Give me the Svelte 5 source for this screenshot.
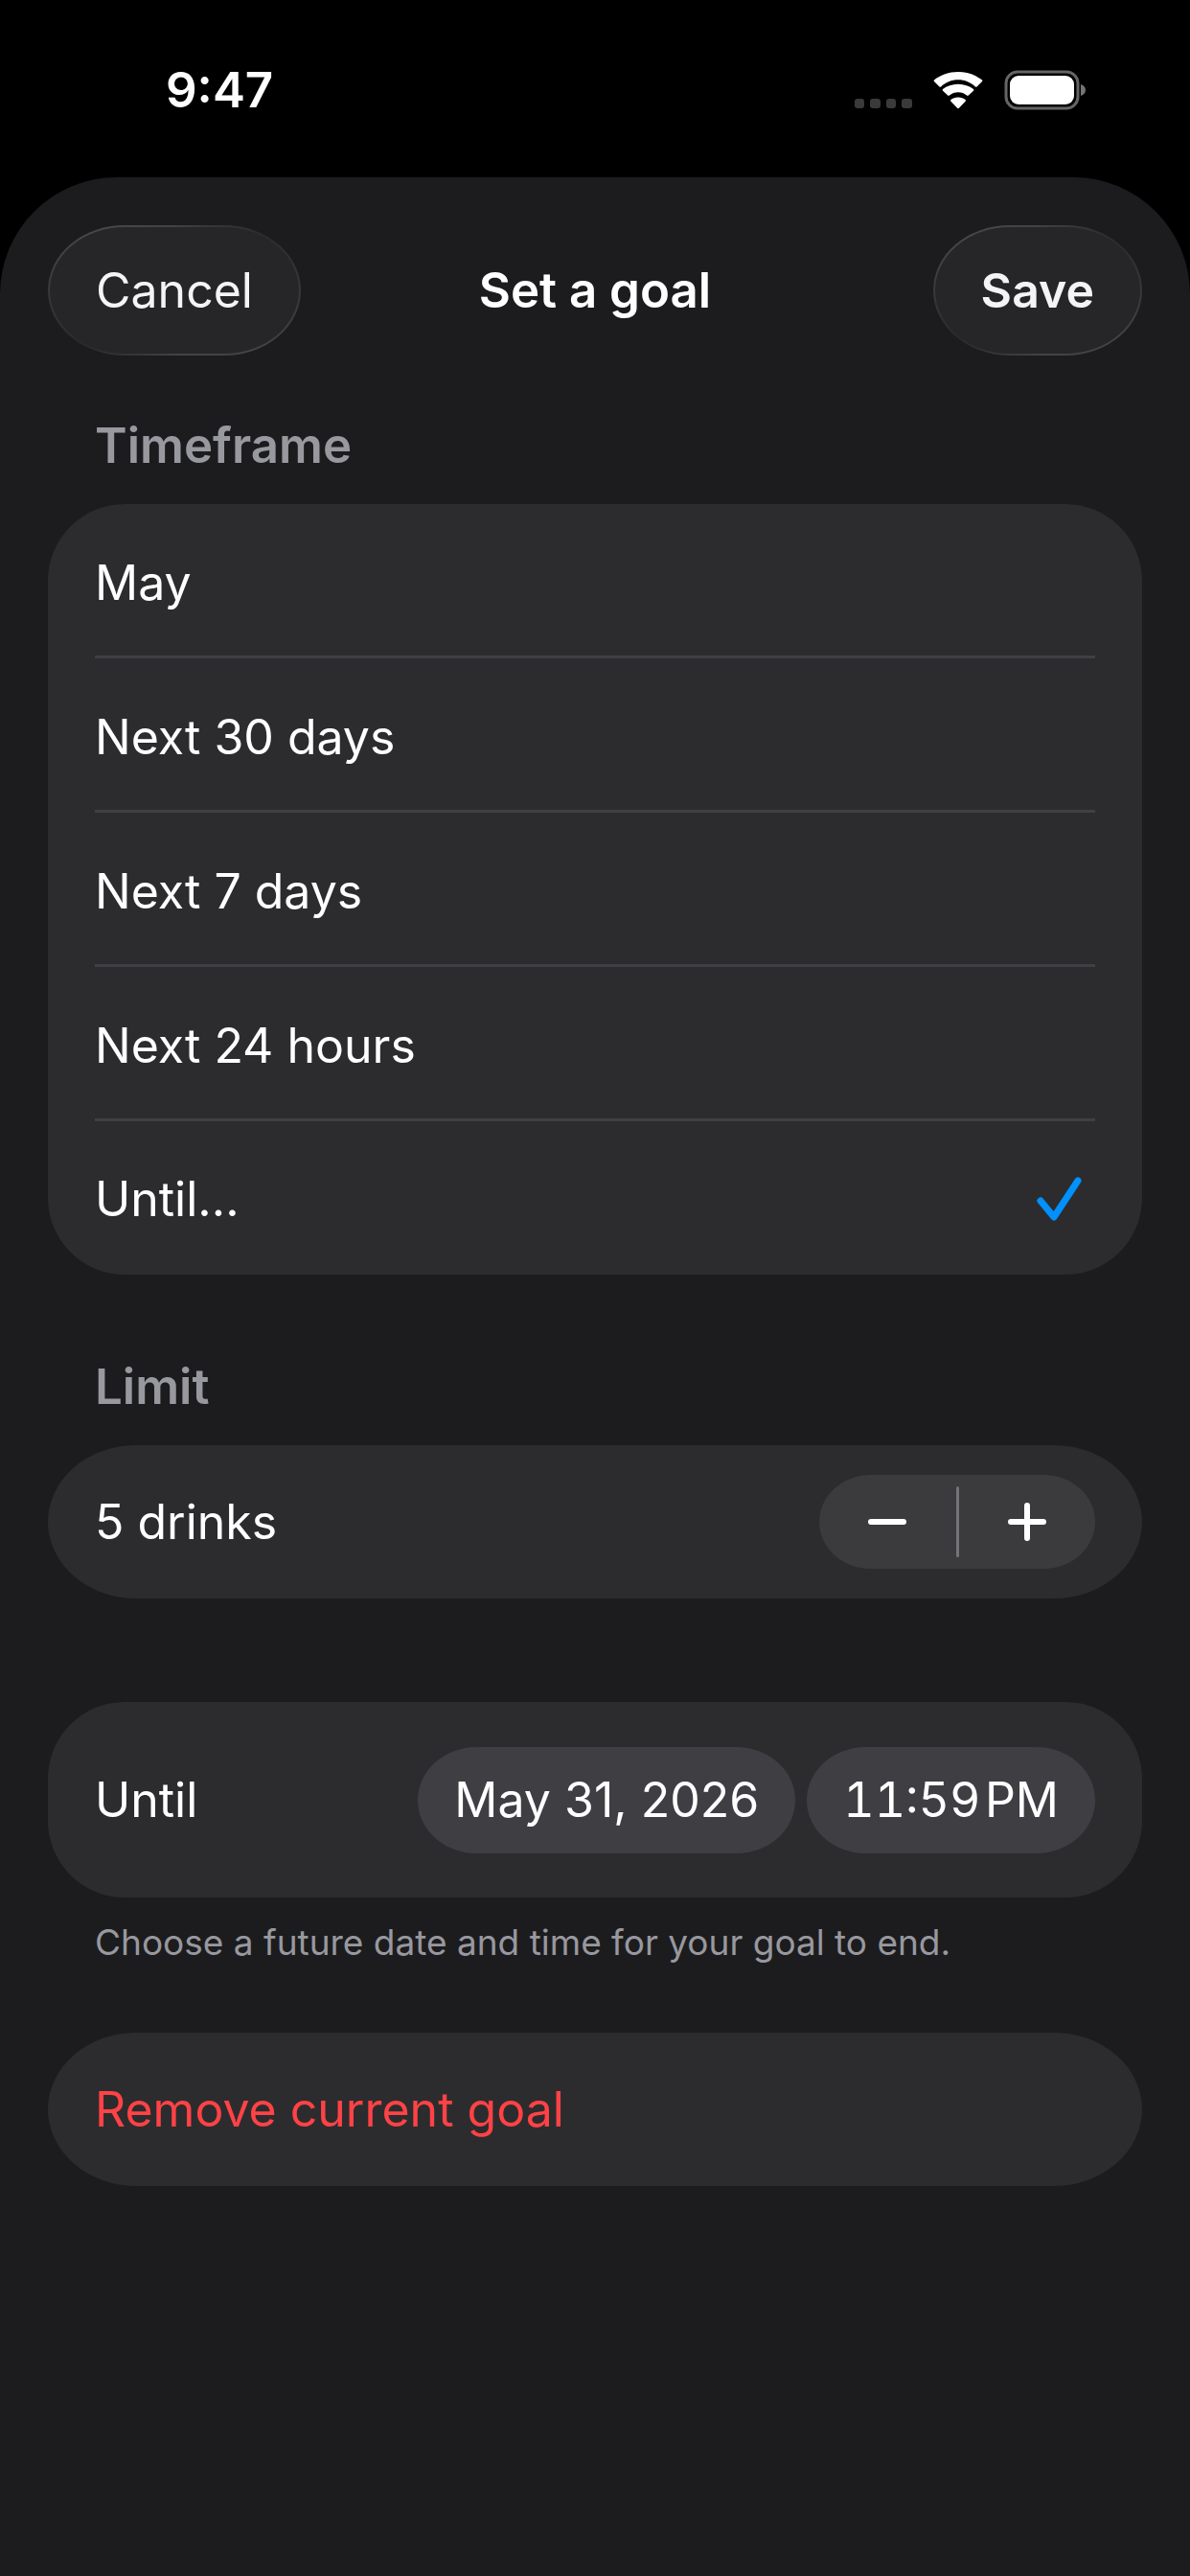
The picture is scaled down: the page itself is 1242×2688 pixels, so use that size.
<script lang="ts">
	const timeframes = ['May', 'Next 30 days', 'Next 7 days', 'Next 24 hours', 'Until...'];

	let selected = $state('Until...');
	let drinks = $state(5);

	const decrease = () => {
		drinks = Math.max(0, drinks - 1);
	};

	const increase = () => {
		drinks += 1;
	};
</script>

<div class="screen">
	<div class="status">
		<time class="status__time">9:47</time>
		<div class="status__icons">
			<svg width="62" height="12" viewBox="0 0 62 12" fill="#3a3a3a" aria-hidden="true">
				<rect x="1" y="1" width="10" height="10" rx="3" />
				<rect x="17" y="1" width="11" height="10" rx="3" />
				<rect x="34" y="1" width="10" height="10" rx="3" />
				<rect x="50" y="1" width="11" height="10" rx="3" />
			</svg>
			<svg class="wifi" width="52" height="39" viewBox="0 0 52 39" fill="#fff" aria-hidden="true">
				<path
					d="M26 8.2c6.9 0 13.2 2.7 17.9 7.2.5.5 1.2.5 1.6 0l5.5-5.3c.5-.5.5-1.2 0-1.6C44.4 3.2 35.6 0 26 0S7.6 3.2 1 8.500c-.5.4-.5 1.1 0 1.6l5.5 5.3c.4.5 1.1.5 1.6 0C12.8 10.9 19.1 8.2 26 8.2z"
				/>
				<path
					d="M26 21.2c3.4 0 6.6 1.2 9.1 3.4.6.5 1.2.5 1.7 0l5.2-4.900c.5-.5.5-1.2 0-1.7C37.8 14.9 32.2 12.8 26 12.8S14.2 14.9 10 18c-.5.5-.5 1.2 0 1.7l5.2 4.900c.5.5 1.1.5 1.7 0 2.500-2.2 5.7-3.4 9.1-3.4z"
				/>
				<path
					d="M33.6 29.1c.5.5.5 1.1 0 1.6l-6.7 7.1c-.5.5-1.3.5-1.8 0l-6.7-7.1c-.5-.5-.5-1.1 0-1.6 2-1.7 4.7-2.6 7.6-2.6s5.6.9 7.6 2.6z"
				/>
			</svg>
			<svg width="86" height="42" viewBox="0 0 86 42" aria-hidden="true">
				<rect x="2" y="2" width="75" height="38" rx="12" fill="none" stroke="#656565" stroke-width="3" />
				<rect x="6" y="6" width="67" height="30" rx="9" fill="#fff" />
				<path d="M80 15c3 1 5 3.2 5 6s-2 5-5 6z" fill="#757575" />
			</svg>
		</div>
	</div>

	<main class="sheet">
		<header class="header">
			<button class="glass-button" type="button">Cancel</button>
			<h1>Set a goal</h1>
			<button class="glass-button glass-button--save" type="button">Save</button>
		</header>

		<section class="group">
			<h2 id="timeframe-title">Timeframe</h2>
			<div class="card" role="radiogroup" aria-labelledby="timeframe-title">
				{#each timeframes as timeframe}
					<label class="option">
						<input type="radio" name="timeframe" value={timeframe} bind:group={selected} />
						<span>{timeframe}</span>
						{#if selected === timeframe}
							<svg class="check" width="48" height="46" viewBox="0 0 48 46" aria-hidden="true">
								<path d="M4 25 18 42 43 4" />
							</svg>
						{/if}
					</label>
				{/each}
			</div>
		</section>

		<section class="group group--limit">
			<h2>Limit</h2>
			<div class="card card--pill row">
				<span>{drinks} drinks</span>
				<div class="stepper">
					<button type="button" aria-label="Decrease" onclick={decrease}>
						<svg width="42" height="42" viewBox="0 0 42 42" aria-hidden="true">
							<path d="M4 21H38" />
						</svg>
					</button>
					<span class="stepper__divider"></span>
					<button type="button" aria-label="Increase" onclick={increase}>
						<svg width="42" height="42" viewBox="0 0 42 42" aria-hidden="true">
							<path d="M4 21H38M21 4V38" />
						</svg>
					</button>
				</div>
			</div>
		</section>

		<section class="group group--until">
			<div class="card row row--tall">
				<span>Until</span>
				<div class="pickers">
					<button class="picker" type="button">May 31, 2026</button>
					<button class="picker picker--time" type="button">11:59&#8202;PM</button>
				</div>
			</div>
			<p class="footnote">Choose a future date and time for your goal to end.</p>
		</section>

		<button class="card card--pill row remove" type="button">Remove current goal</button>
	</main>
</div>

<style>
	:global(body) {
		margin: 0;
		background: #000;
	}

	.screen {
		min-height: 100vh;
		display: flex;
		flex-direction: column;
		background: #000;
		color: #fff;
		font-family: Inter, 'Liberation Sans', sans-serif;
		font-size: 50px;
		line-height: 60px;
	}

	button {
		border: 0;
		margin: 0;
		padding: 0;
		background: none;
		color: inherit;
		font: inherit;
		cursor: pointer;
	}

	svg {
		display: block;
	}

	.status {
		height: 185px;
		box-sizing: border-box;
		padding: 64px 108px 0 173px;
		display: flex;
		justify-content: space-between;
		align-items: flex-start;
	}

	.status__time {
		font-size: 51px;
		font-weight: 600;
	}

	.status__icons {
		height: 60px;
		display: flex;
		align-items: center;
	}

	.status__icons svg:first-child {
		margin-top: 28px;
	}

	.wifi {
		margin: 0 22px 0 21px;
	}

	.sheet {
		flex: 1;
		box-sizing: border-box;
		padding: 50px;
		border-radius: 122px 122px 0 0;
		background: #1c1c1e;
	}

	.header {
		display: grid;
		grid-template-columns: 1fr auto 1fr;
		align-items: center;
	}

	h1,
	h2 {
		margin: 0;
		font-size: 51px;
		font-weight: 600;
	}

	.glass-button {
		justify-self: start;
		height: 136px;
		box-sizing: border-box;
		padding: 0 48px;
		border: 2px solid transparent;
		border-radius: 80px / 68px;
		background:
			linear-gradient(#262628, #262628) padding-box,
			conic-gradient(
					#424246,
					#2c2c2e 60deg,
					#434347 120deg,
					#424246 180deg,
					#2a2a2c 240deg,
					#48484c 300deg,
					#424246
				)
				border-box;
		color: #f4f4f6;
	}

	.glass-button--save {
		justify-self: end;
		font-weight: 600;
	}

	.group {
		margin-top: 64px;
	}

	.group--limit {
		margin-top: 87px;
	}

	.group--until {
		margin-top: 108px;
	}

	h2 {
		padding: 0 49px 31px;
		color: #98989f;
	}

	.card {
		padding: 0 49px;
		border-radius: 80px;
		background: #2c2c2e;
	}

	.card--pill {
		border-radius: 92px / 80px;
	}

	.option {
		height: 160px;
		box-sizing: border-box;
		padding-top: 2px;
		display: flex;
		align-items: center;
		justify-content: space-between;
		cursor: pointer;
	}

	.option:not(:last-child) {
		height: 161px;
		box-shadow: inset 0 -3px #404044;
	}

	.option input {
		appearance: none;
		position: absolute;
		margin: 0;
	}

	.check {
		margin-right: 13px;
		fill: none;
		stroke: #0091ff;
		stroke-width: 7;
		stroke-linecap: round;
		stroke-linejoin: round;
	}

	.row {
		min-height: 160px;
		display: flex;
		align-items: center;
		justify-content: space-between;
	}

	.row--tall {
		min-height: 204px;
	}

	.stepper {
		width: 288px;
		height: 98px;
		display: flex;
		align-items: center;
		border-radius: 54px / 49px;
		background: #3b3b3d;
	}

	.stepper button {
		flex: 1;
		height: 100%;
		display: grid;
		place-items: center;
	}

	.stepper path {
		stroke: #fff;
		stroke-width: 6;
		stroke-linecap: round;
	}

	.stepper__divider {
		width: 3px;
		height: 74px;
		border-radius: 2px;
		background: #747478;
	}

	.pickers {
		display: flex;
		gap: 12px;
	}

	.picker {
		height: 111px;
		padding: 0 38px;
		border-radius: 62px / 56px;
		background: #3f3e42;
	}

	.picker--time {
		font-variant-numeric: tabular-nums;
	}

	.footnote {
		margin: 0;
		padding: 23px 49px 0;
		color: #98989f;
		font-size: 37px;
		line-height: 48px;
	}

	.remove {
		width: 100%;
		margin-top: 70px;
		color: #ff4245;
	}
</style>
